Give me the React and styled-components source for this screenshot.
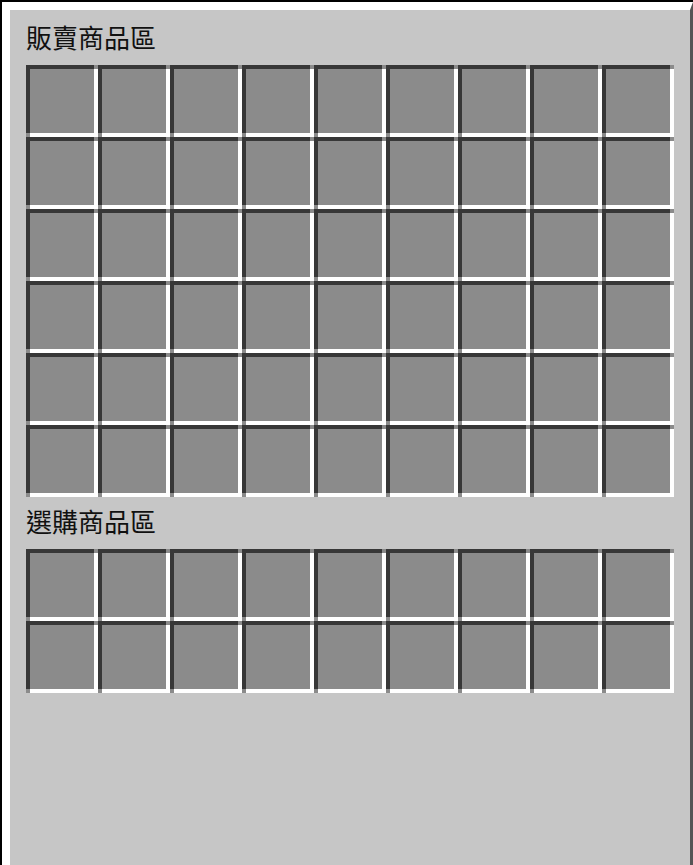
import React from 'react'
import styled, { createGlobalStyle } from 'styled-components';

const GlobalStyle = createGlobalStyle`
  html, body {
    margin: 0;
    padding: 0;
    background: #ffffff;
    overflow: hidden;
  }
  #root {
    height: 100vh;
  }
`;

const Frame = styled.div`
  box-sizing: border-box;
  width: 693px;
  height: 100vh;
  border-left: 2px solid #000;
  border-top: 2px solid #000;
`;

const Panel = styled.div`
  box-sizing: border-box;
  height: 100%;
  background: #c6c6c6;
  border-left: 8px solid #fff;
  border-top: 8px solid #fff;
  border-right: 3px solid #555;
  padding: 3px 16px 0 16px;
  display: flex;
  flex-direction: column;
`;

const Title = styled.h2`
  margin: 0;
  height: 52px;
  line-height: 47px;
  font-family: "Noto Sans CJK TC", "Noto Sans", sans-serif;
  font-weight: 400;
  font-size: 26px;
  color: #111;
`;

const SlotGrid = styled.div`
  display: grid;
  grid-template-columns: repeat(9, 72px);
  grid-auto-rows: 72px;
`;

const Slot = styled.div`
  position: relative;
  box-sizing: border-box;
  background: #8b8b8b;
  border-top: 4px solid #373737;
  border-left: 4px solid #373737;
  border-right: 4px solid #fff;
  border-bottom: 4px solid #fff;

  &::before, &::after {
    content: '';
    position: absolute;
    width: 4px;
    height: 4px;
    background: #8b8b8b;
  }
  &::before {
    top: -4px;
    right: -4px;
  }
  &::after {
    bottom: -4px;
    left: -4px;
  }
`;

function Slots({ rows }) {
    const cells = [];
    for (let i = 0; i < rows * 9; i++) {
        cells.push(<Slot key={i} />);
    }
    return <SlotGrid>{cells}</SlotGrid>;
}

export default function App() {
    return (
        <>
            <GlobalStyle />
            <Frame>
                <Panel>
                    {/* sell area */}
                    <Title>販賣商品區</Title>
                    <Slots rows={6} />
                    {/* buy area */}
                    <Title>選購商品區</Title>
                    <Slots rows={2} />
                </Panel>
            </Frame>
        </>
    )
}
